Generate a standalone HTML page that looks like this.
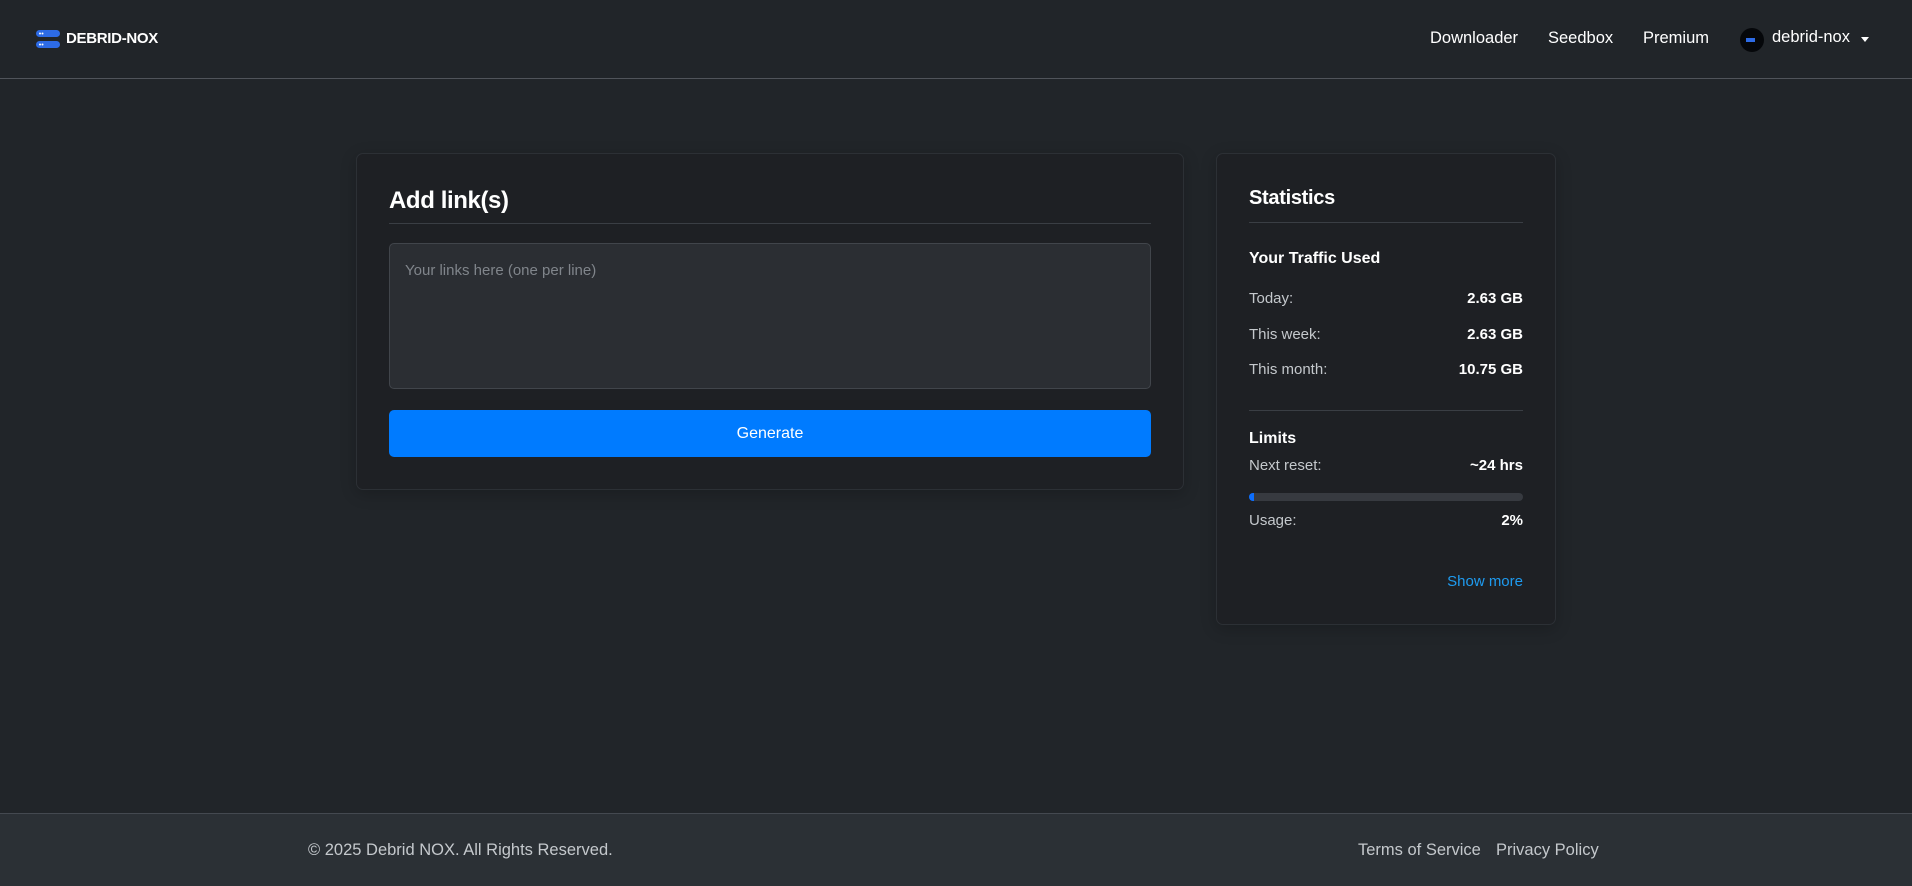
<!DOCTYPE html>
<html><head><meta charset="utf-8"><style>
*{box-sizing:border-box;margin:0;padding:0}
body{width:1912px;height:886px;background:#212529;font-family:"Liberation Sans",Arial,sans-serif;color:#dee2e6;position:relative;overflow:hidden}
.a{position:absolute;white-space:nowrap}
.nav{position:absolute;left:0;top:0;width:1912px;height:79px;border-bottom:1px solid #50545a;background:#212529}
.nl{font-size:16.5px;color:#fff;top:29px}
.card{position:absolute;background:#1e2024;border:1px solid #2c3035;border-radius:7px;box-shadow:0 4px 16px rgba(0,0,0,.2)}
.hr{position:absolute;height:1px;background:#3a3e44}
.lbl{font-size:15px;color:#c4c8cc}
.val{font-size:15px;color:#fff;font-weight:bold;text-align:right}
</style></head><body>
<div class="nav"></div>
<svg class="a" style="left:36px;top:30px" width="24" height="19" viewBox="0 0 24 19"><rect x="0" y="0" width="24" height="7" rx="3.5" fill="#2d6be6"/><rect x="0" y="11" width="24" height="7" rx="3.5" fill="#2d6be6"/><circle cx="4" cy="3.5" r="1" fill="#fff"/><circle cx="6.5" cy="3.5" r="1" fill="#fff"/><circle cx="4" cy="14.5" r="1" fill="#fff"/><circle cx="6.5" cy="14.5" r="1" fill="#fff"/></svg>
<div class="a" style="left:66px;top:30px;font-size:15px;font-weight:bold;color:#fff;letter-spacing:-0.3px">DEBRID-NOX</div>
<div class="a nl" style="left:1430px">Downloader</div>
<div class="a nl" style="left:1548px">Seedbox</div>
<div class="a nl" style="left:1643px">Premium</div>
<div class="a" style="left:1740px;top:28px;width:24px;height:24px;border-radius:50%;background:#05070a"><div style="position:absolute;left:6px;top:10px;width:9px;height:4px;background:#2d6be6"></div></div>
<div class="a nl" style="left:1772px;top:28px">debrid-nox</div>
<div class="a" style="left:1861px;top:37px;width:0;height:0;border-left:4px solid transparent;border-right:4px solid transparent;border-top:5px solid #fff"></div>

<div class="card" style="left:356px;top:153px;width:828px;height:337px"></div>
<div class="a" style="left:389px;top:187px;font-size:24px;color:#fff;font-weight:bold;letter-spacing:-0.4px">Add link(s)</div>
<div class="hr" style="left:389px;top:223px;width:762px"></div>
<div class="a" style="left:389px;top:243px;width:762px;height:146px;background:#2b2e33;border:1px solid #41454b;border-radius:5px"></div>
<div class="a" style="left:405px;top:262px;font-size:15px;color:#80858b">Your links here (one per line)</div>
<div class="a" style="left:389px;top:410px;width:762px;height:47px;background:#007bff;border-radius:5px;color:#fff;font-size:16px;text-align:center;line-height:47px">Generate</div>

<div class="card" style="left:1216px;top:153px;width:340px;height:472px"></div>
<div class="a" style="left:1249px;top:187px;font-size:20px;color:#fff;font-weight:bold;letter-spacing:-0.3px">Statistics</div>
<div class="hr" style="left:1249px;top:222px;width:274px"></div>
<div class="a" style="left:1249px;top:250px;font-size:16px;font-weight:bold;color:#fff">Your Traffic Used</div>
<div class="a lbl" style="left:1249px;top:290px">Today:</div><div class="a val" style="right:389px;top:290px">2.63 GB</div>
<div class="a lbl" style="left:1249px;top:326px">This week:</div><div class="a val" style="right:389px;top:326px">2.63 GB</div>
<div class="a lbl" style="left:1249px;top:361px">This month:</div><div class="a val" style="right:389px;top:361px">10.75 GB</div>
<div class="hr" style="left:1249px;top:410px;width:274px"></div>
<div class="a" style="left:1249px;top:430px;font-size:16px;font-weight:bold;color:#fff">Limits</div>
<div class="a lbl" style="left:1249px;top:457px">Next reset:</div><div class="a val" style="right:389px;top:457px">~24 hrs</div>
<div class="a" style="left:1249px;top:493px;width:274px;height:8px;background:#373a40;border-radius:4px;overflow:hidden"><div style="width:5px;height:8px;background:#0d6efd"></div></div>
<div class="a lbl" style="left:1249px;top:512px">Usage:</div><div class="a val" style="right:389px;top:512px">2%</div>
<div class="a" style="right:389px;top:573px;font-size:15px;color:#1e9bf0">Show more</div>

<div class="a" style="left:0;top:813px;width:1912px;height:73px;background:#2b3035;border-top:1px solid #444950"></div>
<div class="a" style="left:308px;top:841px;font-size:16.5px;color:#c4c8cc">© 2025 Debrid NOX. All Rights Reserved.</div>
<div class="a" style="left:1358px;top:841px;font-size:16.5px;color:#c4c8cc">Terms of Service</div>
<div class="a" style="left:1496px;top:841px;font-size:16.5px;color:#c4c8cc">Privacy Policy</div>
</body></html>
